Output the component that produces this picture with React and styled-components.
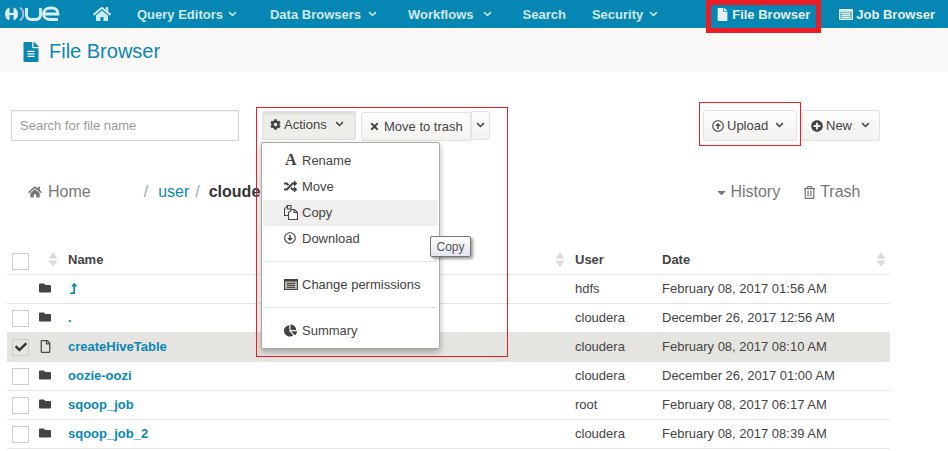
import React from 'react';
import styled, { createGlobalStyle } from 'styled-components';
import {
  FaHome, FaFile, FaFileAlt, FaCog, FaTimes, FaRandom, FaChartPie,
  FaPlusCircle, FaCaretDown, FaRegTrashAlt, FaFolder, FaRegFile, FaCheck, FaLevelUpAlt, FaRegArrowAltCircleUp, FaRegArrowAltCircleDown,
} from 'react-icons/fa';

const Global = createGlobalStyle`
  html, body { margin: 0; padding: 0; background: #fff; }
  body { font-family: "Liberation Sans", Arial, sans-serif; width: 948px; height: 451px; overflow: hidden; }
`;

const Page = styled.div`position: relative; width: 948px; height: 451px; overflow: hidden; color: #444;`;

const Nav = styled.nav`
  height: 28px; background: #0687b3; display: flex; align-items: center; padding-left: 4px;
  color: #d8eff6; font-size: 13px; font-weight: 700;
`;
const NavItem = styled.span`
  display: inline-flex; align-items: center; gap: ${p => p.$gap ?? 3}px; margin-left: ${p => p.$ml}px; white-space: nowrap;
  color: ${p => p.$bright ? '#e3f3f8' : '#cfeaf2'};
`;

const TitleBar = styled.div`
  height: 44px; background: #faf9f7; display: flex; align-items: center; padding: 3px 0 0 23px; gap: 10px;
  color: #0b87b3; font-size: 20px; box-sizing: border-box;
`;

const Toolbar = styled.div`
  display: flex; align-items: flex-start; height: 31px; margin-top: 38px; padding-left: 11px;
`;
const Search = styled.div`
  width: 228px; height: 31px; box-sizing: border-box; border: 1px solid #d8d6d0; box-shadow: inset 0 1px 1px rgba(0,0,0,.06);
  color: #9b9b9b; font-size: 13px; display: flex; align-items: center; padding-left: 8px;
`;
const Button = styled.div`
  box-sizing: border-box; height: ${p => p.$h ?? 29}px; width: ${p => p.$w}px; margin-left: ${p => p.$ml ?? 0}px; margin-top: ${p => p.$mt ?? 0}px;
  border: 1px solid #e4e2dd; border-radius: ${p => p.$radius ?? '2px'};
  background: ${p => p.$pressed ? '#f0eeea' : 'linear-gradient(#fdfdfc, #f3f2ef)'};
  box-shadow: ${p => p.$pressed ? 'inset 0 2px 3px rgba(0,0,0,.08)' : 'none'};
  display: flex; align-items: center; justify-content: ${p => p.$pl != null ? 'flex-start' : 'center'}; gap: ${p => p.$gap ?? 3}px;
  padding: 0 0 ${p => p.$pb ?? 0}px ${p => p.$pl ?? 0}px;
  color: #444; font-size: 13px; white-space: nowrap;
`;
const Chevron = ({ size = 9, color = 'currentColor', ml = 0 }) => (
  <svg width={size} height={size * 0.67} viewBox="0 0 12 8" style={{ marginLeft: ml }} fill="none">
    <path d="M1.5 1.500 6 6l4.500-4.500" stroke={color} strokeWidth="2" />
  </svg>
);

const Crumbs = styled.div`
  display: flex; align-items: center; height: 22px; margin-top: 40px; padding-left: 28px; font-size: 16px; color: #777;
`;
const Crumb = styled.span`
  margin-left: ${p => p.$ml ?? 0}px; color: ${p => p.$color ?? '#777'}; font-weight: ${p => p.$bold ? 700 : 400};
  display: inline-flex; align-items: center; gap: ${p => p.$gap ?? 0}px; white-space: nowrap;
`;

const Table = styled.div`margin: 43px 0 0 7px; width: 883px; font-size: 13px;`;
const Row = styled.div`
  display: grid; grid-template-columns: 25px 36px 484px 23px 87px 214px 14px; height: 29px; align-items: center;
  border-bottom: 1px solid #e6e5e2; box-sizing: border-box; padding-bottom: 2px; background: ${p => p.$selected ? '#e5e4e0' : 'transparent'};
`;
const HeadCell = styled.div`font-weight: 700; color: #444;`;
const Cell = styled.div`color: #444; white-space: nowrap;`;
const NameCell = styled(Cell)`color: #0b87b3; font-weight: 700; display: flex; align-items: center;`;
const Check = styled.div`
  width: 17px; height: 17px; box-sizing: border-box; border: 1px solid #cfcdc6; background: ${p => p.$selected ? '#e5e4e0' : '#fff'};
  margin: ${p => p.$head ? 4 : 2}px 0 0 5px; display: flex; align-items: center; justify-content: center; color: #333; font-size: 12px;
`;
const IconCell = styled.div`display: flex; align-items: center; padding-left: 7px; color: #444; font-size: 13px;`;
const SortWrap = styled.div`display: flex; justify-content: ${p => p.$end ? 'flex-start' : 'flex-end'}; padding-right: ${p => p.$end ? 0 : 10}px;`;

const Sort = () => (
  <svg width="10" height="15" viewBox="0 0 10 15"><path d="M5 0l4.500 6.500H.5z M5 15L.5 8.500h9z" fill="#dcdbd7" /></svg>
);

const Menu = styled.div`
  position: absolute; left: 261px; top: 142px; width: 179px; height: 207px; box-sizing: border-box; padding: 5px 1px;
  background: #fff; border: 1px solid #aaa8a2; border-radius: 2px; box-shadow: 0 3px 6px rgba(0,0,0,.3); font-size: 13px; color: #444;
`;
const MenuItem = styled.div`
  height: 26px; box-sizing: border-box; padding: 0 0 2px 21px; display: grid; grid-template-columns: 18px 1fr; align-items: center; background: ${p => p.$hover ? '#f0efed' : 'transparent'};
`;
const MenuIcon = styled.span`display: flex; align-items: center; color: #444; font-size: 13px;`;
const SerifA = styled.span`font-family: "Liberation Serif", serif; font-weight: 700; font-size: 16px; line-height: 1; color: #444; margin-left: 1px;`;
const Divider = styled.div`height: 1px; background: #e5e5e5; margin: 9px 1px 10px;`;

const Tooltip = styled.div`
  position: absolute; left: 430px; top: 236px; width: 41px; height: 21px; box-sizing: border-box; border: 1px solid #767676; border-radius: 2px;
  background: linear-gradient(#fff, #e4e5f0); box-shadow: 2px 2px 3px rgba(0,0,0,.4); font-size: 12px; color: #575757;
  display: flex; align-items: center; justify-content: center;
`;
const RedBox = styled.div`
  position: absolute; left: ${p => p.$x}px; top: ${p => p.$y}px; width: ${p => p.$w}px; height: ${p => p.$h}px;
  box-sizing: border-box; border: ${p => p.$t ?? 1}px solid #ed1c24; pointer-events: none;
`;

const Logo = () => (
  <svg width="56" height="16" viewBox="0 0 56 16" fill="none">
    <path d="M5.500 1.500C2.500 2.600 1 5 1 8s1.500 5.400 4.500 6.500V1.500z" fill="#d8eff6" />
    <path d="M9.500 1.500c3 1.100 4.500 3.500 4.500 6.500s-1.500 5.400-4.500 6.500z" fill="#d8eff6" />
    <path d="M5 8h5" stroke="#d8eff6" strokeWidth="2.200" />
    <path d="M16 1.500c2.600 2 3.400 4 3.400 6.500s-.8 4.500-3.400 6.500" stroke="#a9bfe8" strokeWidth="1.800" />
    <path d="M22.500 2v6.500c0 3.300 2 5 5 5h4c3 0 5-1.700 5-5V2" stroke="#d8eff6" strokeWidth="2.800" />
    <path d="M40.500 8h13.500c0-3.700-2.500-6-6-6h-2c-3.500 0-6.500 2.300-6.500 6s3 5.500 6.500 5.500h8" stroke="#d8eff6" strokeWidth="2.800" />
  </svg>
);

const CopyIcon = () => (
  <svg width="14" height="15" viewBox="0 0 14 15" fill="none" stroke="#444" strokeWidth="1.100">
    <path d="M3.500.5h3.500v3.500H3.500zM3.500.5 .5 4v6.500h4.500" />
    <path d="M8 4.500h2.500l3 3v7H4.500v-7z" fill="#fff" />
    <path d="M10 4.500v3h3.500" />
  </svg>
);

const ListIcon = ({ color = '#444', band = '#b5b1a8' }) => (
  <svg width="14" height="11" viewBox="0 0 14 11">
    <rect x=".5" y=".5" width="13" height="10" fill={band} stroke={color} />
    <path d="M1 1.500h12" stroke={color} strokeWidth="2" />
    <path d="M3 4.500h8M3 6.500h8M3 8.500h8" stroke={color} />
  </svg>
);

const rows = [
  { up: true, user: 'hdfs', date: 'February 08, 2017 01:56 AM', noCheck: true },
  { name: '.', user: 'cloudera', date: 'December 26, 2017 12:56 AM' },
  { name: 'createHiveTable', user: 'cloudera', date: 'February 08, 2017 08:10 AM', file: true, selected: true },
  { name: 'oozie-oozi', user: 'cloudera', date: 'December 26, 2017 01:00 AM' },
  { name: 'sqoop_job', user: 'root', date: 'February 08, 2017 06:17 AM' },
  { name: 'sqoop_job_2', user: 'cloudera', date: 'February 08, 2017 08:39 AM' },
];

export default function App() {
  return (
    <Page>
      <Global />
      <Nav>
        <Logo />
        <NavItem $ml={33}><FaHome size={18} /></NavItem>
        <NavItem $ml={26} $gap={5}>Query Editors <Chevron /></NavItem>
        <NavItem $ml={33} $gap={7}>Data Browsers <Chevron /></NavItem>
        <NavItem $ml={31} $gap={9}>Workflows <Chevron /></NavItem>
        <NavItem $ml={31}>Search</NavItem>
        <NavItem $ml={26} $gap={6}>Security <Chevron /></NavItem>
        <NavItem $ml={58} $bright><FaFile size={13} />File Browser</NavItem>
        <NavItem $ml={29} $bright><ListIcon color="#e3f3f8" band="#7fbdd3" />Job Browser</NavItem>
      </Nav>
      <TitleBar><FaFileAlt size={20} color="#0b87b3" style={{ width: 16 }} />File Browser</TitleBar>
      <Toolbar>
        <Search>Search for file name</Search>
        <Button $w={94} $ml={23} $mt={1} $pl={7} $pb={2} $pressed><FaCog size={11} />Actions<Chevron ml={5} /></Button>
        <Button $w={110} $ml={5} $mt={2} $pl={7} $radius="2px 0 0 2px" $gap={4}><FaTimes size={11} />Move to trash</Button>
        <Button $w={19} $mt={1} $radius="0 2px 2px 0"><Chevron /></Button>
        <Button $w={94} $h={31} $ml={213} $pl={8}><FaRegArrowAltCircleUp size={12} />Upload<Chevron ml={4} /></Button>
        <Button $w={78} $h={31} $ml={5} $pl={8}><FaPlusCircle size={12} />New<Chevron ml={6} /></Button>
      </Toolbar>
      <Crumbs>
        <Crumb $gap={6}><FaHome size={14} />Home</Crumb>
        <Crumb $ml={53} $color="#8aa">/</Crumb>
        <Crumb $ml={10} $color="#0b87b3">user</Crumb>
        <Crumb $ml={6} $color="#8aa">/</Crumb>
        <Crumb $ml={9} $bold $color="#333">cloudera</Crumb>
        <Crumb $ml={440} $gap={2}><FaCaretDown size={13} />History</Crumb>
        <Crumb $ml={23} $gap={4}><FaRegTrashAlt size={13} />Trash</Crumb>
      </Crumbs>
      <Table>
        <Row>
          <Check $head />
          <SortWrap><Sort /></SortWrap>
          <HeadCell>Name</HeadCell>
          <SortWrap><Sort /></SortWrap>
          <HeadCell>User</HeadCell>
          <HeadCell>Date</HeadCell>
          <SortWrap $end><Sort /></SortWrap>
        </Row>
        {rows.map((r, i) => (
          <Row key={i} $selected={r.selected}>
            {r.noCheck ? <span /> : <Check $selected={r.selected}>{r.selected && <FaCheck size={12} />}</Check>}
            <IconCell>{r.file ? <FaRegFile size={13} /> : <FaFolder size={12} />}</IconCell>
            <NameCell>{r.up ? <FaLevelUpAlt size={11} /> : r.name}</NameCell>
            <span />
            <Cell>{r.user}</Cell>
            <Cell>{r.date}</Cell>
            <span />
          </Row>
        ))}
      </Table>
      <Menu>
        <MenuItem><MenuIcon><SerifA>A</SerifA></MenuIcon>Rename</MenuItem>
        <MenuItem><MenuIcon><FaRandom size={13} /></MenuIcon>Move</MenuItem>
        <MenuItem $hover><MenuIcon><CopyIcon /></MenuIcon>Copy</MenuItem>
        <MenuItem><MenuIcon><FaRegArrowAltCircleDown size={12} /></MenuIcon>Download</MenuItem>
        <Divider />
        <MenuItem><MenuIcon><ListIcon /></MenuIcon>Change permissions</MenuItem>
        <Divider />
        <MenuItem><MenuIcon><FaChartPie size={13} /></MenuIcon>Summary</MenuItem>
      </Menu>
      <Tooltip>Copy</Tooltip>
      <RedBox $x={706} $y={0} $w={115} $h={33} $t={5} />
      <RedBox $x={256} $y={107} $w={252} $h={250} />
      <RedBox $x={699} $y={102} $w={102} $h={44} />
    </Page>
  );
}
